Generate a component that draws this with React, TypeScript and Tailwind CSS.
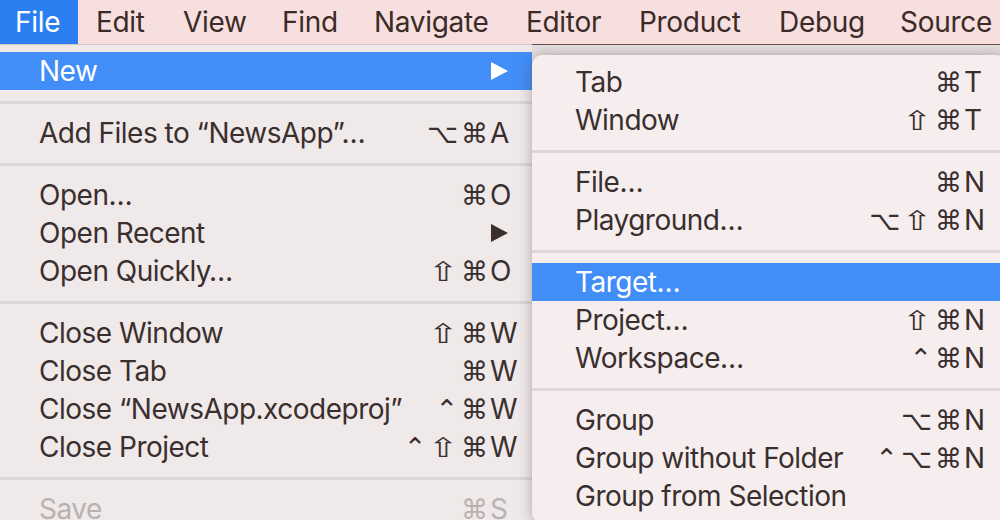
import type { ReactNode } from 'react'

type Item =
  | { kind: 'sep' }
  | {
      kind: 'item'
      label: string
      mods?: string
      keyChar?: string
      submenu?: boolean
      active?: boolean
      disabled?: boolean
    }

const menuBar = [
  { label: 'File', w: 'w-[78px]', pl: 'pl-[15px]', active: true },
  { label: 'Edit', w: 'w-[87px]', pl: 'pl-[18px]' },
  { label: 'View', w: 'w-[99px]', pl: 'pl-[18px]' },
  { label: 'Find', w: 'w-[92px]', pl: 'pl-[18px]' },
  { label: 'Navigate', w: 'w-[152px]', pl: 'pl-[18px]' },
  { label: 'Editor', w: 'w-[113px]', pl: 'pl-[18px]' },
  { label: 'Product', w: 'w-[140px]', pl: 'pl-[18px]' },
  { label: 'Debug', w: 'w-[121px]', pl: 'pl-[18px]' },
  { label: 'Source', w: 'w-[140px]', pl: 'pl-[18px]' },
]

const fileMenu: Item[] = [
  { kind: 'item', label: 'New', submenu: true, active: true },
  { kind: 'sep' },
  { kind: 'item', label: 'Add Files to \u201cNewsApp\u201d\u2026', mods: '\u2325\u2318', keyChar: 'A' },
  { kind: 'sep' },
  { kind: 'item', label: 'Open\u2026', mods: '\u2318', keyChar: 'O' },
  { kind: 'item', label: 'Open Recent', submenu: true },
  { kind: 'item', label: 'Open Quickly\u2026', mods: '\u21e7\u2318', keyChar: 'O' },
  { kind: 'sep' },
  { kind: 'item', label: 'Close Window', mods: '\u21e7\u2318', keyChar: 'W' },
  { kind: 'item', label: 'Close Tab', mods: '\u2318', keyChar: 'W' },
  { kind: 'item', label: 'Close \u201cNewsApp.xcodeproj\u201d', mods: '\u2303\u2318', keyChar: 'W' },
  { kind: 'item', label: 'Close Project', mods: '\u2303\u21e7\u2318', keyChar: 'W' },
  { kind: 'sep' },
  { kind: 'item', label: 'Save', mods: '\u2318', keyChar: 'S', disabled: true },
]

const newMenu: Item[] = [
  { kind: 'item', label: 'Tab', mods: '\u2318', keyChar: 'T' },
  { kind: 'item', label: 'Window', mods: '\u21e7\u2318', keyChar: 'T' },
  { kind: 'sep' },
  { kind: 'item', label: 'File\u2026', mods: '\u2318', keyChar: 'N' },
  { kind: 'item', label: 'Playground\u2026', mods: '\u2325\u21e7\u2318', keyChar: 'N' },
  { kind: 'sep' },
  { kind: 'item', label: 'Target\u2026', active: true },
  { kind: 'item', label: 'Project\u2026', mods: '\u21e7\u2318', keyChar: 'N' },
  { kind: 'item', label: 'Workspace\u2026', mods: '\u2303\u2318', keyChar: 'N' },
  { kind: 'sep' },
  { kind: 'item', label: 'Group', mods: '\u2325\u2318', keyChar: 'N' },
  { kind: 'item', label: 'Group without Folder', mods: '\u2303\u2325\u2318', keyChar: 'N' },
  { kind: 'item', label: 'Group from Selection' },
]

function Arrow({ light }: { light?: boolean }) {
  return (
    <svg viewBox="0 0 18 18" className="h-[18px] w-[18px]" aria-hidden="true">
      <path d="M1 0L18 9L1 18Z" fill={light ? '#ffffff' : '#3a2f2e'} />
    </svg>
  )
}

// shift glyph in DejaVu is narrow, widen it a bit
function Mods({ mods }: { mods: string }) {
  return (
    <span className="flex items-center gap-[3px] pr-[2px] font-['DejaVu_Sans',sans-serif] text-[27px]">
      {[...mods].map((g, i) =>
        g === '\u21e7' ? (
          <span key={i} className="inline-block scale-x-[1.35] px-[3px]">
            {g}
          </span>
        ) : (
          <span key={i}>{g}</span>
        ),
      )}
    </span>
  )
}

function MenuList({ items, pl }: { items: Item[]; pl: string }): ReactNode {
  return items.map((item, i) => {
    if (item.kind === 'sep') {
      return (
        <div key={i} className="flex h-[24px] items-center">
          <div className="h-[3px] w-full bg-[#ddd6d6]" />
        </div>
      )
    }
    const color = item.active ? 'bg-[#428ef8] text-white' : item.disabled ? 'text-[#b9b1b1]' : 'text-[#3a2f2e]'
    return (
      <div key={i} className={`flex h-[38px] items-center pr-[12px] ${pl} ${color}`}>
        <span className="flex-1 whitespace-nowrap tracking-[-0.5px]">{item.label}</span>
        <span className="flex items-center">
          {item.mods && <Mods mods={item.mods} />}
          <span className="flex w-[30px] items-center">
            {item.submenu ? <Arrow light={item.active} /> : item.keyChar}
          </span>
        </span>
      </div>
    )
  })
}

export default function App() {
  return (
    <div className="relative h-[520px] w-[1000px] overflow-hidden bg-[#e6e0e0] font-['Inter','Liberation_Sans',sans-serif] text-[28px] leading-none">
      <div className="flex h-[45px] border-b border-[#6e504d] bg-[#f6dfde] text-[#3c2a27]">
        {menuBar.map((m) => (
          <div
            key={m.label}
            className={`flex h-[44px] shrink-0 items-center tracking-[-0.3px] ${m.w} ${m.pl} ${m.active ? 'bg-[#2b7ff0] text-white' : ''}`}
          >
            {m.label}
          </div>
        ))}
      </div>

      <div className="absolute left-0 top-[44px] w-[532px] border-t border-[#cfc8c8] bg-[#efe9e9] pt-[7px]">
        <MenuList items={fileMenu} pl="pl-[39px]" />
      </div>

      <div className="absolute left-[532px] top-[55px] w-[474px] rounded-[10px] bg-[#f6eeee] pt-[8px] shadow-[0_0_14px_rgba(60,40,40,0.35)]">
        <MenuList items={newMenu} pl="pl-[43px]" />
        <div className="h-[8px]" />
      </div>
    </div>
  )
}
